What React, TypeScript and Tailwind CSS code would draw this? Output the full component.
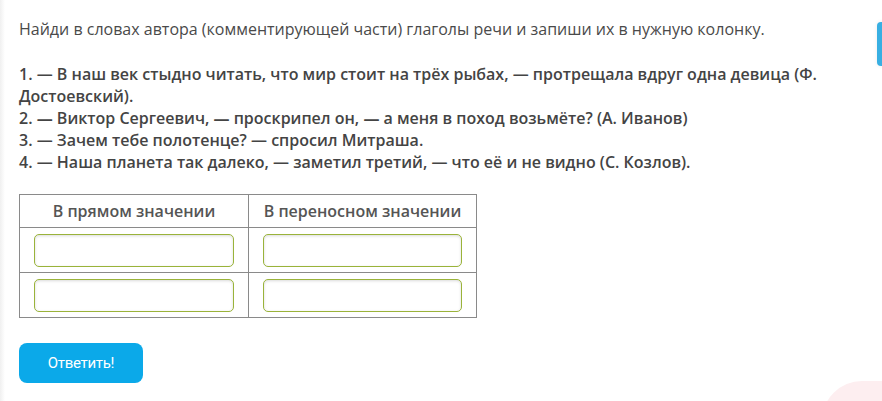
import React from "react";

export default function App() {
  const inputCls =
    "h-[33px] w-full rounded-[5px] border border-[#9ab33a] bg-white shadow-[inset_0_1px_3px_rgba(0,0,0,0.15)]";
  return (
    <div
      className="relative h-[401px] w-[882px] overflow-hidden bg-white text-[#4a4a4a]"
      style={{ fontFamily: '"Open Sans", "Noto Sans", sans-serif' }}
    >
      <div className="absolute left-0 top-0 h-full w-[5px] bg-gradient-to-r from-[#f0f0f0] to-white" />
      <div className="absolute right-[-6px] top-[22px] h-[44px] w-[11px] rounded-[4px] bg-[#38afe2] shadow-[0_0_4px_rgba(0,0,0,0.08)]" />
      <div className="absolute bottom-[-60px] right-[-40px] h-[80px] w-[100px] rounded-full bg-[#fdeef0]" />

      <div className="px-[19px] pt-[18px] text-[16px] leading-[22px]">
        <p>Найди в словах автора (комментирующей части) глаголы речи и запиши их в нужную колонку.</p>
        <div className="mt-[23px] font-semibold text-[#444]">
          <p>1. — В наш век стыдно читать, что мир стоит на трёх рыбах, — протрещала вдруг одна девица (Ф. Достоевский).</p>
          <p>2. <b className="font-bold">—</b> Виктор Сергеевич, <b className="font-bold">—</b> проскрипел он, <b className="font-bold">—</b> а меня в поход возьмёте? (А. Иванов)</p>
          <p>3. — Зачем тебе полотенце? — спросил Митраша.</p>
          <p>4. — Наша планета так далеко, — заметил третий, — что её и не видно (С. Козлов).</p>
        </div>

        <table className="mt-[21px] w-[458px] border-collapse border border-[#8a8a8a]">
          <thead>
            <tr className="h-[33px]">
              <th className="w-[229px] border border-[#8a8a8a] text-center font-semibold text-[#555]">В прямом значении</th>
              <th className="border border-[#8a8a8a] text-center font-semibold text-[#555]">В переносном значении</th>
            </tr>
          </thead>
          <tbody>
            {[0, 1].map((r) => (
              <tr key={r} className="h-[45px]">
                <td className="border border-[#8a8a8a] px-[14px]">
                  <div className={inputCls} />
                </td>
                <td className="border border-[#8a8a8a] px-[14px]">
                  <div className={inputCls} />
                </td>
              </tr>
            ))}
          </tbody>
        </table>

        <button
          className="mt-[25px] flex h-[40px] w-[124px] items-center justify-center rounded-[8px] bg-[#0ba9e9] text-[15px] tracking-[-0.3px] text-white"
          style={{ fontFamily: 'Roboto, "Liberation Sans", sans-serif' }}
        >
          Ответить!
        </button>
      </div>
    </div>
  );
}
